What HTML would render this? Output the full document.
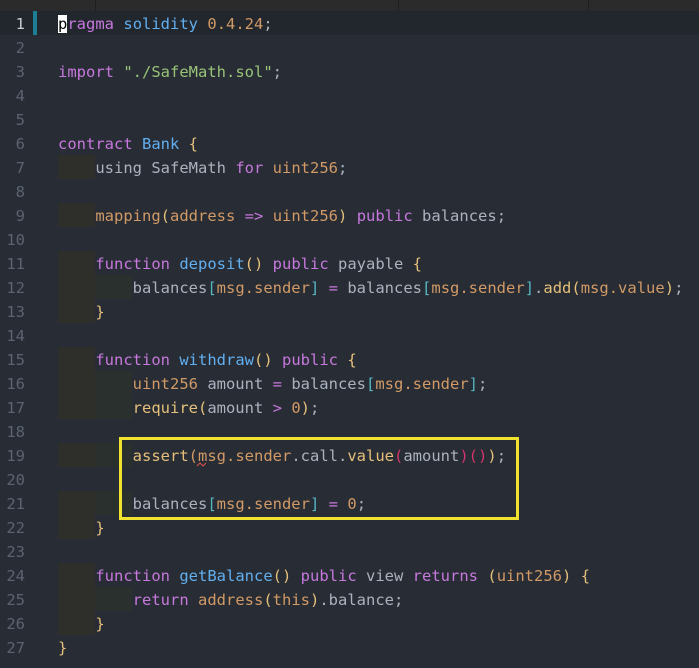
<!DOCTYPE html>
<html><head><style>
body{margin:0;width:699px;height:668px;background:#282c34;overflow:hidden;position:relative;font-family:"DejaVu Sans Mono","Liberation Mono",monospace;font-size:15.5px;}
.top{position:absolute;left:0;top:0;width:699px;height:11px;background:#2b2b2c;}
.top i{position:absolute;top:0;width:1px;height:11px;background:#1f1f1f;}
.ln{position:absolute;left:0;width:699px;height:24px;line-height:26px;white-space:pre;color:#abb2bf;}
.n{position:absolute;left:0;width:25px;text-align:right;color:#5c6370;}
.c{position:absolute;left:58px;}
.g1,.g2{position:absolute;top:0;height:24px;}
.g1{left:58px;width:37px;background:#2e2f2a;}
.g2{left:95px;width:37px;background:#2a302d;}
.k{color:#c678dd}.b{color:#61afef}.o{color:#d19a66}.s{color:#98c379}.y{color:#e5c07b}.cy{color:#56b6c2}.r{color:#d0366b}
.box{position:absolute;left:119px;top:437px;width:394px;height:77px;border:3px solid #f2e230;}
</style></head><body>
<div class="top"><i style="left:95px"></i><i style="left:398px"></i><i style="left:588px"></i></div>
<div class="ln" style="top:11px;background:#22262d"><span class="n" style="color:#c8ccd4">1</span><span style="position:absolute;left:33px;top:0;width:4px;height:24px;background:#1d7f94"></span><span class="c"><span style="background:#fff;color:#000">p</span><span class="k">ragma</span> <span class="b">solidity</span> <span class="o">0.4.24</span>;</span></div>
<div class="ln" style="top:35px"><span class="n">2</span></div>
<div class="ln" style="top:59px"><span class="n">3</span><span class="c"><span class="k">import</span> <span class="s">"./SafeMath.sol"</span>;</span></div>
<div class="ln" style="top:83px"><span class="n">4</span></div>
<div class="ln" style="top:107px"><span class="n">5</span></div>
<div class="ln" style="top:131px"><span class="n">6</span><span class="c"><span class="k">contract</span> <span class="b">Bank</span> <span class="y">{</span></span></div>
<div class="ln" style="top:155px"><span class="n">7</span><span class="g1"></span><span class="c">    using SafeMath <span class="k">for</span> <span class="o">uint256</span>;</span></div>
<div class="ln" style="top:179px"><span class="n">8</span></div>
<div class="ln" style="top:203px"><span class="n">9</span><span class="g1"></span><span class="c">    <span class="o">mapping</span><span class="y">(</span><span class="o">address</span> <span class="k">=&gt;</span> <span class="o">uint256</span><span class="y">)</span> <span class="k">public</span> balances;</span></div>
<div class="ln" style="top:227px"><span class="n">10</span></div>
<div class="ln" style="top:251px"><span class="n">11</span><span class="g1"></span><span class="c">    <span class="k">function</span> <span class="b">deposit</span><span class="y">()</span> <span class="k">public</span> payable <span class="y">{</span></span></div>
<div class="ln" style="top:275px"><span class="n">12</span><span class="g1"></span><span class="g2"></span><span class="c">        balances<span class="cy">[</span><span class="o">msg.sender</span><span class="cy">]</span> <span class="k">=</span> balances<span class="cy">[</span><span class="o">msg.sender</span><span class="cy">]</span>.<span class="y">add</span><span class="y">(</span><span class="o">msg.value</span><span class="y">)</span>;</span></div>
<div class="ln" style="top:299px"><span class="n">13</span><span class="g1"></span><span class="c">    <span class="y">}</span></span></div>
<div class="ln" style="top:323px"><span class="n">14</span></div>
<div class="ln" style="top:347px"><span class="n">15</span><span class="g1"></span><span class="c">    <span class="k">function</span> <span class="b">withdraw</span><span class="y">()</span> <span class="k">public</span> <span class="y">{</span></span></div>
<div class="ln" style="top:371px"><span class="n">16</span><span class="g1"></span><span class="g2"></span><span class="c">        <span class="o">uint256</span> amount <span class="k">=</span> balances<span class="cy">[</span><span class="o">msg.sender</span><span class="cy">]</span>;</span></div>
<div class="ln" style="top:395px"><span class="n">17</span><span class="g1"></span><span class="g2"></span><span class="c">        <span class="y">require(</span>amount <span class="k">&gt;</span> <span class="o">0</span><span class="y">)</span>;</span></div>
<div class="ln" style="top:419px"><span class="n">18</span></div>
<div class="ln" style="top:443px"><span class="n">19</span><span class="g1"></span><span class="g2"></span><span class="c">        <span class="y">assert</span><span class="o">(</span><span class="o">msg.sender</span>.call.<span class="y">value</span><span class="r">(</span>amount<span class="r">)()</span><span class="y">)</span>;</span></div>
<div class="ln" style="top:467px"><span class="n">20</span></div>
<div class="ln" style="top:491px"><span class="n">21</span><span class="g1"></span><span class="g2"></span><span class="c">        balances<span class="cy">[</span><span class="o">msg.sender</span><span class="cy">]</span> <span class="k">=</span> <span class="o">0</span>;</span></div>
<div class="ln" style="top:515px"><span class="n">22</span><span class="g1"></span><span class="c">    <span class="y">}</span></span></div>
<div class="ln" style="top:539px"><span class="n">23</span></div>
<div class="ln" style="top:563px"><span class="n">24</span><span class="g1"></span><span class="c">    <span class="k">function</span> <span class="b">getBalance</span><span class="y">()</span> <span class="k">public</span> view <span class="k">returns</span> <span class="y">(</span><span class="o">uint256</span><span class="y">)</span> <span class="y">{</span></span></div>
<div class="ln" style="top:587px"><span class="n">25</span><span class="g1"></span><span class="g2"></span><span class="c">        <span class="k">return</span> <span class="o">address</span><span class="y">(</span><span class="o">this</span><span class="y">)</span>.balance;</span></div>
<div class="ln" style="top:611px"><span class="n">26</span><span class="g1"></span><span class="c">    <span class="y">}</span></span></div>
<div class="ln" style="top:635px"><span class="n">27</span><span class="c"><span class="y">}</span></span></div>
<svg style="position:absolute;left:196px;top:462px" width="12" height="5"><path d="M1 4 L4 1 L7 4 L10 1" stroke="#e0524a" stroke-width="1" fill="none"/></svg>
<div class="box"></div>
</body></html>
